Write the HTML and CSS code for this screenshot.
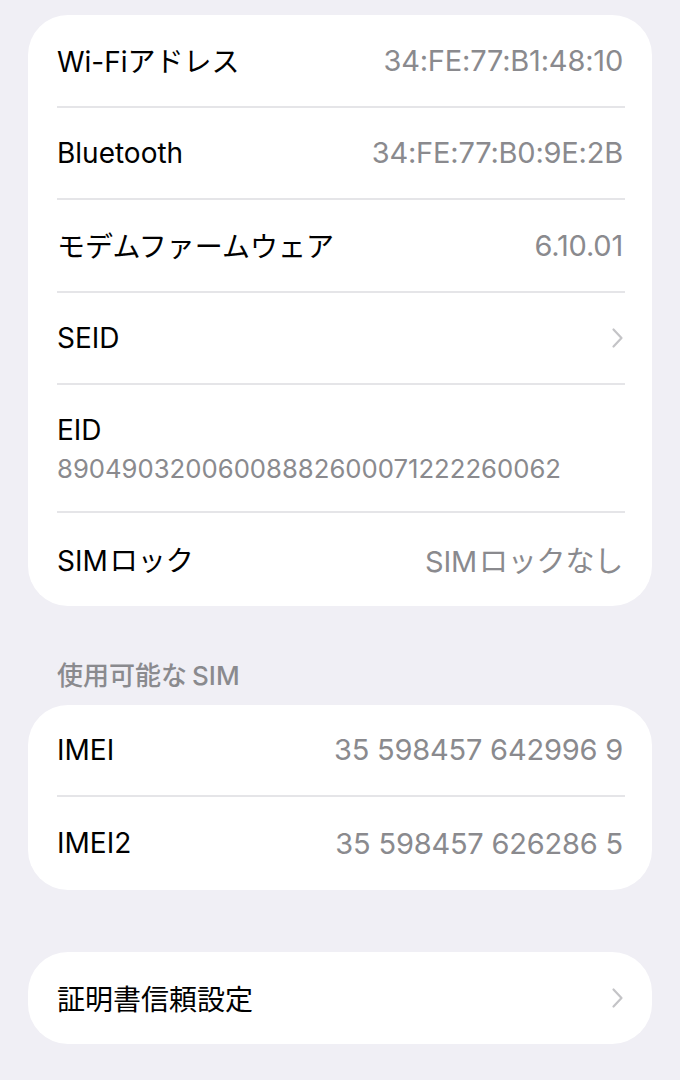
FILE: index.html
```html
<!DOCTYPE html>
<html lang="ja">
<head>
    <meta charset="UTF-8">
    <meta name="viewport" content="width=device-width, initial-scale=1.0">
    <title>情報</title>
    <link rel="stylesheet" href="styles.css">
</head>
<body>

    <div class="page">

        <!-- Device info -->
        <div class="group">
            <div class="row">
                <span class="label">Wi-Fiアドレス</span>
                <span class="value">34:FE:77:B1:48:10</span>
            </div>
            <div class="row">
                <span class="label">Bluetooth</span>
                <span class="value">34:FE:77:B0:9E:2B</span>
            </div>
            <div class="row">
                <span class="label">モデムファームウェア</span>
                <span class="value">6.10.01</span>
            </div>
            <div class="row">
                <span class="label">SEID</span>
                <svg class="chevron" viewBox="0 0 13 22" width="13" height="22">
                    <path d="M2.5 2.5 L10.5 11 L2.5 19.5" fill="none" stroke="#c4c4c7" stroke-width="2.2" stroke-linecap="round" stroke-linejoin="round"/>
                </svg>
            </div>
            <div class="row row-tall">
                <span class="label">EID</span>
                <span class="value sub">89049032006008882600071222260062</span>
            </div>
            <div class="row">
                <span class="label">SIM<span class="gap"></span>ロック</span>
                <span class="value">SIM<span class="gap"></span>ロックなし</span>
            </div>
        </div>

        <!-- Available SIM -->
        <div class="section-title">使用可能な<span class="gap wide"></span>SIM</div>
        <div class="group">
            <div class="row">
                <span class="label">IMEI</span>
                <span class="value">35 598457 642996 9</span>
            </div>
            <div class="row">
                <span class="label">IMEI2</span>
                <span class="value">35 598457 626286 5</span>
            </div>
        </div>

        <div class="group group-last">
            <div class="row">
                <span class="label">証明書信頼設定</span>
                <svg class="chevron" viewBox="0 0 13 22" width="13" height="22">
                    <path d="M2.5 2.5 L10.5 11 L2.5 19.5" fill="none" stroke="#c4c4c7" stroke-width="2.2" stroke-linecap="round" stroke-linejoin="round"/>
                </svg>
            </div>
        </div>

    </div>

</body>
</html>
```

FILE: styles.css
```css
body {
    margin: 0;
    background-color: #f0eff5;
    font-family: Inter, "Noto Sans CJK JP", sans-serif;
    color: #000;
}

.page {
    padding: 15px 28px 20px 28px;
}

.group {
    background: white;
    border-radius: 40px;
    overflow: hidden;
}

.row {
    box-sizing: border-box;
    display: flex;
    align-items: center;
    justify-content: space-between;
    height: 92.5px;
    margin: 0 27px 0 29px;
    border-bottom: 2px solid #e5e5e8;
}

.row:last-child {
    border-bottom: none;
}

.row-tall {
    flex-direction: column;
    align-items: flex-start;
    justify-content: center;
    height: 128px;
    gap: 6px;
}

.label {
    font-size: 28px;
}

.value {
    font-size: 29px;
    color: #8a8a8e;
    margin-right: 2px;
    letter-spacing: -0.2px;
}

.value.sub {
    font-size: 25.7px;
    letter-spacing: 0;
}

/* small space between latin and kana, like iOS */
.gap {
    display: inline-block;
    width: 2px;
}

.gap.wide {
    width: 5px;
}

.chevron {
    margin-right: 1px;
}

.section-title {
    font-size: 26px;
    font-weight: 500;
    line-height: 36px;
    color: #8a8a8e;
    padding: 52px 0 11px 29px;
}

.group-last {
    margin-top: 62px;
}
```
